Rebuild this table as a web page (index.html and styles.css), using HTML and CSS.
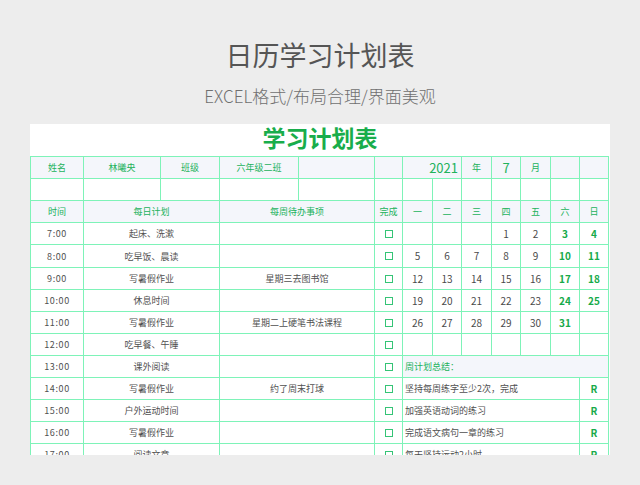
FILE: index.html
```html
<!DOCTYPE html>
<html lang="zh-CN">
<head>
<meta charset="utf-8">
<title>日历学习计划表</title>
<link rel="stylesheet" href="styles.css">
</head>
<body>
<header class="hero">
  <h1 class="hero-title">日历学习计划表</h1>
  <p class="hero-sub">EXCEL格式/布局合理/界面美观</p>
</header>
<section class="sheet">
  <h2 class="sheet-title">学习计划表</h2>
  <div class="grid">
    <!-- row 1 -->
    <div class="c hd g">姓名</div>
    <div class="c hd g">林曦央</div>
    <div class="c hd g">班级</div>
    <div class="c hd g">六年级二班</div>
    <div class="c hd"></div>
    <div class="c hd"></div>
    <div class="c hd g big right s2">2021</div>
    <div class="c hd g">年</div>
    <div class="c hd g big">7</div>
    <div class="c hd g">月</div>
    <div class="c hd"></div>
    <div class="c hd"></div>
    <!-- row 2 -->
    <div class="c"></div><div class="c"></div><div class="c"></div><div class="c"></div><div class="c"></div><div class="c"></div><div class="c"></div><div class="c"></div><div class="c"></div><div class="c"></div><div class="c"></div><div class="c"></div><div class="c"></div>
    <!-- row 3 -->
    <div class="c hd g">时间</div>
    <div class="c hd g s2">每日计划</div>
    <div class="c hd g s2">每周待办事项</div>
    <div class="c hd g">完成</div>
    <div class="c hd g">一</div>
    <div class="c hd g">二</div>
    <div class="c hd g">三</div>
    <div class="c hd g">四</div>
    <div class="c hd g">五</div>
    <div class="c hd g">六</div>
    <div class="c hd g">日</div>
    <!-- 7:00 -->
    <div class="c t">7:00</div>
    <div class="c s2">起床、洗漱</div>
    <div class="c s2"></div>
    <div class="c"><span class="box"></span></div>
    <div class="c d"></div><div class="c d"></div><div class="c d"></div>
    <div class="c d">1</div><div class="c d">2</div>
    <div class="c d w">3</div><div class="c d w">4</div>
    <!-- 8:00 -->
    <div class="c t">8:00</div>
    <div class="c s2">吃早饭、晨读</div>
    <div class="c s2"></div>
    <div class="c"><span class="box"></span></div>
    <div class="c d">5</div><div class="c d">6</div><div class="c d">7</div>
    <div class="c d">8</div><div class="c d">9</div>
    <div class="c d w">10</div><div class="c d w">11</div>
    <!-- 9:00 -->
    <div class="c t">9:00</div>
    <div class="c s2">写暑假作业</div>
    <div class="c s2">星期三去图书馆</div>
    <div class="c"><span class="box"></span></div>
    <div class="c d">12</div><div class="c d">13</div><div class="c d">14</div>
    <div class="c d">15</div><div class="c d">16</div>
    <div class="c d w">17</div><div class="c d w">18</div>
    <!-- 10:00 -->
    <div class="c t">10:00</div>
    <div class="c s2">休息时间</div>
    <div class="c s2"></div>
    <div class="c"><span class="box"></span></div>
    <div class="c d">19</div><div class="c d">20</div><div class="c d">21</div>
    <div class="c d">22</div><div class="c d">23</div>
    <div class="c d w">24</div><div class="c d w">25</div>
    <!-- 11:00 -->
    <div class="c t">11:00</div>
    <div class="c s2">写暑假作业</div>
    <div class="c s2">星期二上硬笔书法课程</div>
    <div class="c"><span class="box"></span></div>
    <div class="c d">26</div><div class="c d">27</div><div class="c d">28</div>
    <div class="c d">29</div><div class="c d">30</div>
    <div class="c d w">31</div><div class="c d"></div>
    <!-- 12:00 -->
    <div class="c t">12:00</div>
    <div class="c s2">吃早餐、午睡</div>
    <div class="c s2"></div>
    <div class="c"><span class="box"></span></div>
    <div class="c"></div><div class="c"></div><div class="c"></div><div class="c"></div><div class="c"></div><div class="c"></div><div class="c"></div>
    <!-- 13:00 -->
    <div class="c t">13:00</div>
    <div class="c s2">课外阅读</div>
    <div class="c s2"></div>
    <div class="c"><span class="box"></span></div>
    <div class="c hd g left s7">周计划总结：</div>
    <!-- 14:00 -->
    <div class="c t">14:00</div>
    <div class="c s2">写暑假作业</div>
    <div class="c s2">约了周末打球</div>
    <div class="c"><span class="box"></span></div>
    <div class="c left s6">坚持每周练字至少2次，完成</div>
    <div class="c r">R</div>
    <!-- 15:00 -->
    <div class="c t">15:00</div>
    <div class="c s2">户外运动时间</div>
    <div class="c s2"></div>
    <div class="c"><span class="box"></span></div>
    <div class="c left s6">加强英语动词的练习</div>
    <div class="c r">R</div>
    <!-- 16:00 -->
    <div class="c t">16:00</div>
    <div class="c s2">写暑假作业</div>
    <div class="c s2"></div>
    <div class="c"><span class="box"></span></div>
    <div class="c left s6">完成语文病句一章的练习</div>
    <div class="c r">R</div>
    <!-- 17:00 -->
    <div class="c t">17:00</div>
    <div class="c s2">阅读文章</div>
    <div class="c s2"></div>
    <div class="c"><span class="box"></span></div>
    <div class="c left s6">每天坚持运动2小时</div>
    <div class="c r">R</div>
  </div>
</section>
</body>
</html>
```
FILE: styles.css
```css
* { box-sizing: border-box; }
html, body {
  margin: 0;
  padding: 0;
  background: #ededed;
  font-family: "Noto Sans CJK SC", "Noto Sans", sans-serif;
}
.hero {
  height: 124px;
  padding-top: 41px;
  text-align: center;
}
.hero-title {
  margin: 0;
  font-size: 27px;
  line-height: 27px;
  font-weight: 400;
  color: #555555;
}
.hero-sub {
  margin: 19px 0 0;
  font-size: 17px;
  line-height: 17px;
  font-weight: 300;
  color: #707070;
}
.sheet {
  margin-left: 30px;
  width: 580px;
  height: 331px;
  overflow: hidden;
  background: #ffffff;
}
.sheet-title {
  margin: 0;
  height: 32px;
  font-size: 23px;
  line-height: 26px;
  font-weight: 700;
  color: #19ad4b;
  text-align: center;
}
.grid {
  display: grid;
  width: max-content;
  grid-template-columns: 52px 76px 58px 78px 75px 27px 29px 28px 29px 28px 29px 28px 28px;
  grid-template-rows: 21px 21px 21px 21px 22px repeat(9, 21px);
  gap: 1px;
  padding: 1px;
  background: #7ef3b8;
}
.c {
  background: #ffffff;
  display: flex;
  align-items: center;
  justify-content: center;
  font-size: 9px;
  line-height: 1;
  color: #505050;
  white-space: nowrap;
  overflow: hidden;
}
.hd { background: #f4f6fb; }
.g { color: #22b25b; }
.big { font-size: 13px; }
.right { justify-content: flex-end; padding-right: 3px; }
.left { justify-content: flex-start; padding-left: 2px; }
.s2 { grid-column: span 2; }
.s6 { grid-column: span 6; }
.s7 { grid-column: span 7; }
.t { letter-spacing: 0.6px; font-size: 9px; }
.d { font-size: 10px; color: #4a4a4a; }
.w { color: #17aa4a; font-weight: 700; }
.r { color: #17aa4a; font-weight: 700; font-size: 10px; }
.box {
  display: block;
  width: 8px;
  height: 8px;
  border: 1px solid #35c476;
}
```
